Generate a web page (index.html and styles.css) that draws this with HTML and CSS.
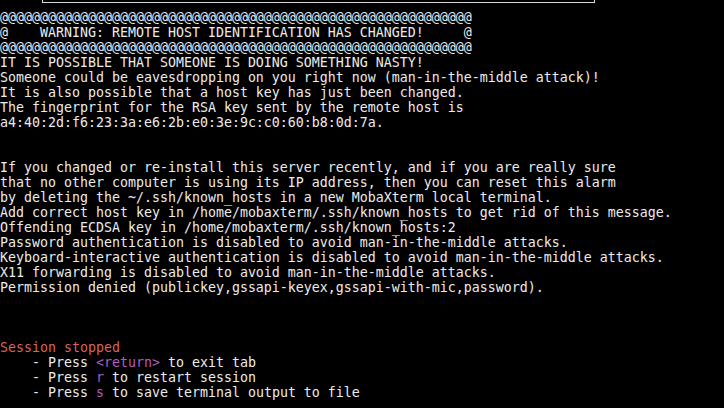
FILE: index.html
```html
<!DOCTYPE html>
<html>
<head>
<meta charset="utf-8">
<link rel="stylesheet" href="styles.css">
</head>
<body>
<div class="term">
<div class="topbox"></div>
<div class="out">
<div class="ln">@@@@@@@@@@@@@@@@@@@@@@@@@@@@@@@@@@@@@@@@@@@@@@@@@@@@@@@@@@@</div>
<div class="ln">@    WARNING: REMOTE HOST IDENTIFICATION HAS CHANGED!     @</div>
<div class="ln">@@@@@@@@@@@@@@@@@@@@@@@@@@@@@@@@@@@@@@@@@@@@@@@@@@@@@@@@@@@</div>
<div class="ln">IT IS POSSIBLE THAT SOMEONE IS DOING SOMETHING NASTY!</div>
<div class="ln">Someone could be eavesdropping on you right now (man-in-the-middle attack)!</div>
<div class="ln">It is also possible that a host key has just been changed.</div>
<div class="ln">The fingerprint for the RSA key sent by the remote host is</div>
<div class="ln">a4:40:2d:f6:23:3a:e6:2b:e0:3e:9c:c0:60:b8:0d:7a.</div>
<div class="ln blank"></div>
<div class="ln blank"></div>
<div class="ln">If you changed or re-install this server recently, and if you are really sure</div>
<div class="ln">that no other computer is using its IP address, then you can reset this alarm</div>
<div class="ln">by deleting the ~/.ssh/known_hosts in a new MobaXterm local terminal.</div>
<div class="ln">Add correct host key in /home/mobaxterm/.ssh/known_hosts to get rid of this message.</div>
<div class="ln">Offending ECDSA key in /home/mobaxterm/.ssh/known_hosts:2</div>
<div class="ln">Password authentication is disabled to avoid man-in-the-middle attacks.</div>
<div class="ln">Keyboard-interactive authentication is disabled to avoid man-in-the-middle attacks.</div>
<div class="ln">X11 forwarding is disabled to avoid man-in-the-middle attacks.</div>
<div class="ln">Permission denied (publickey,gssapi-keyex,gssapi-with-mic,password).</div>
<div class="ln blank"></div>
<div class="ln blank"></div>
<div class="ln blank"></div>
<div class="ln stop">Session stopped</div>
<div class="ln indent"><span>- Press </span><span class="key">&lt;return&gt;</span><span> to exit tab</span></div>
<div class="ln indent"><span>- Press </span><span class="key">r</span><span> to restart session</span></div>
<div class="ln indent"><span>- Press </span><span class="key">s</span><span> to save terminal output to file</span></div>
</div>
</div>
</body>
</html>
```
FILE: styles.css
```css
html, body {
  margin: 0;
  padding: 0;
  background: #000;
}
.term {
  width: 724px;
  height: 408px;
  overflow: hidden;
  background: #000;
}
.topbox {
  margin-left: 42px;
  width: 551px;
  height: 2px;
  border: 1px solid #d8d8d8;
  border-top: none;
}
.out {
  margin-top: 7px;
  font-family: "DejaVu Sans Mono", monospace;
  font-size: 13.29px;
  line-height: 15px;
  color: #ececec;
}
.ln {
  white-space: pre;
  height: 15px;
}
.indent {
  padding-left: 32px;
}
.stop {
  color: #d8645c;
}
.key {
  color: #b45cc4;
}
```
